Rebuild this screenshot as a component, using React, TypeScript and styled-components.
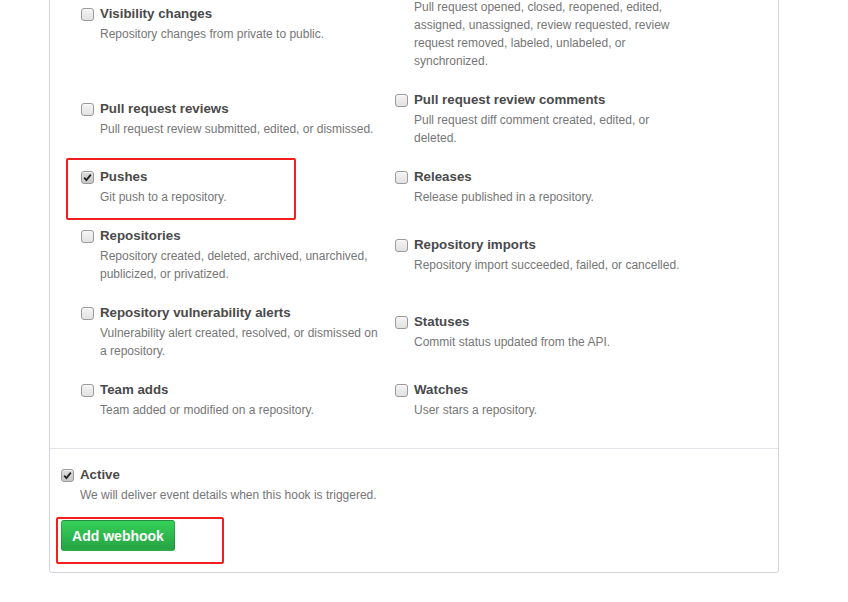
import React from "react";
import styled, { createGlobalStyle } from "styled-components";

const GlobalStyle = createGlobalStyle`
  html, body {
    margin: 0;
    padding: 0;
    background: #ffffff;
    overflow: hidden;
  }
  body {
    font-family: "Liberation Sans", Arial, sans-serif;
    color: #333333;
  }
`;

const Page = styled.div`
  width: 848px;
  height: 602px;
  overflow: hidden;
  padding-left: 49px;
  box-sizing: border-box;
`;

const Box = styled.div`
  width: 730px;
  box-sizing: border-box;
  margin-top: -51px;
  border: 1px solid #d1d5da;
  border-radius: 3px;
  background: #fff;
`;

const Events = styled.div`
  display: grid;
  grid-template-columns: 314px 314px;
  align-items: center;
  padding: 16px 0 20px 31px;
  border-bottom: 1px solid #e1e4e8;
`;

const Item = styled.div`
  position: relative;
  display: flex;
  align-items: flex-start;
  gap: 6px;
  padding: 10px 0 9px;
`;

const Check = styled.span<{ $checked?: boolean }>`
  flex: none;
  position: relative;
  width: 11px;
  height: 11px;
  margin-top: 5px;
  border: 1px solid #9a9a9a;
  border-radius: 3px;
  background: ${(p) =>
    p.$checked
      ? "linear-gradient(#dcdcdc, #c8c8c8)"
      : "linear-gradient(#f4f4f4, #e2e2e2)"};
  box-shadow: inset 0 1px 0 rgba(255, 255, 255, 0.6);
`;

const Tick = styled.svg`
  position: absolute;
  left: 1px;
  top: 1px;
`;

const Texts = styled.div`
  display: flex;
  flex-direction: column;
`;

const Title = styled.div`
  font-size: 13.3px;
  line-height: 22px;
  font-weight: bold;
  color: #4a4a4a;
`;

const Note = styled.div`
  font-size: 12px;
  line-height: 18px;
  color: #767676;
`;

const NoteBox = styled(Note)`
  max-width: 280px;
`;

const Highlight = styled.div<{ $l: number; $t: number; $w: number; $h: number }>`
  position: absolute;
  left: ${(p) => p.$l}px;
  top: ${(p) => p.$t}px;
  width: ${(p) => p.$w}px;
  height: ${(p) => p.$h}px;
  box-sizing: border-box;
  border: 2px solid #f2201c;
  border-radius: 2px;
  pointer-events: none;
`;

const Footer = styled.div`
  position: relative;
  padding: 15px 11px 21px;
`;

const ActiveRow = styled.div`
  display: flex;
  align-items: flex-start;
  gap: 6px;
`;

const Button = styled.button`
  margin-top: 16px;
  display: block;
  width: 114px;
  height: 31px;
  padding: 0;
  border: 1px solid rgba(27, 31, 35, 0.2);
  border-radius: 3px;
  background: linear-gradient(#34d058, #28a745 90%);
  color: #fff;
  font-family: "Liberation Sans", Arial, sans-serif;
  font-size: 14px;
  font-weight: bold;
  cursor: pointer;
`;

type Ev = { title: string; note: string; checked?: boolean; mark?: boolean };

const events: Ev[] = [
  { title: "Visibility changes", note: "Repository changes from private to public." },
  {
    title: "Pull requests",
    note:
      "Pull request opened, closed, reopened, edited, assigned, unassigned, review requested, review request removed, labeled, unlabeled, or synchronized.",
  },
  { title: "Pull request reviews", note: "Pull request review submitted, edited, or dismissed." },
  { title: "Pull request review comments", note: "Pull request diff comment created, edited, or deleted." },
  { title: "Pushes", note: "Git push to a repository.", checked: true, mark: true },
  { title: "Releases", note: "Release published in a repository." },
  { title: "Repositories", note: "Repository created, deleted, archived, unarchived, publicized, or privatized." },
  { title: "Repository imports", note: "Repository import succeeded, failed, or cancelled." },
  { title: "Repository vulnerability alerts", note: "Vulnerability alert created, resolved, or dismissed on a repository." },
  { title: "Statuses", note: "Commit status updated from the API." },
  { title: "Team adds", note: "Team added or modified on a repository." },
  { title: "Watches", note: "User stars a repository." },
];

const TickIcon = () => (
  <Tick width="9" height="9" viewBox="0 0 9 9">
    <path d="M1.2 4.6 L3.4 7 L7.8 1.6" fill="none" stroke="#222" strokeWidth="1.8" />
  </Tick>
);

const Checkbox = ({ checked }: { checked?: boolean }) => (
  <Check $checked={checked}>{checked && <TickIcon />}</Check>
);

export default function App() {
  return (
    <Page>
      <GlobalStyle />
      <Box>
        <Events>
          {events.map((e) => (
            <Item key={e.title}>
              <Checkbox checked={e.checked} />
              <Texts>
                <Title>{e.title}</Title>
                <NoteBox>{e.note}</NoteBox>
              </Texts>
              {e.mark && <Highlight $l={-15} $t={2} $w={230} $h={62} />}
            </Item>
          ))}
        </Events>
        <Footer>
          <ActiveRow>
            <Checkbox checked />
            <Texts>
              <Title>Active</Title>
              <Note>We will deliver event details when this hook is triggered.</Note>
            </Texts>
          </ActiveRow>
          <Button type="submit">Add webhook</Button>
          <Highlight $l={6} $t={68} $w={168} $h={47} />
        </Footer>
      </Box>
    </Page>
  );
}
